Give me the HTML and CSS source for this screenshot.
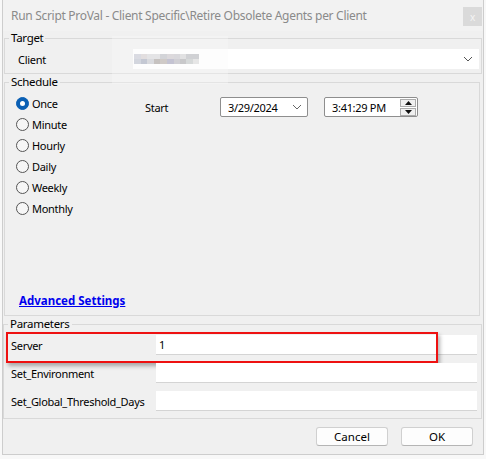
FILE: index.html
```html
<!DOCTYPE html>
<html>
<head>
<meta charset="utf-8">
<link rel="stylesheet" href="styles.css">
</head>
<body>
<div class="window">
  <div class="titlebar">
    <span class="title">Run Script ProVal - Client Specific\Retire Obsolete Agents per Client</span>
    <span class="close">x</span>
  </div>

  <fieldset class="group target">
    <legend>Target</legend>
    <div class="client-row">
      <span class="lbl">Client</span>
      <div class="combo">
        <span class="pix"><span class="pix-a"></span><span class="pix-b"></span></span>
        <svg class="chev" width="10" height="6" viewBox="0 0 10 6"><path d="M1 1 L5 5 L9 1" fill="none" stroke="#555" stroke-width="1"/></svg>
      </div>
    </div>
  </fieldset>

  <fieldset class="group schedule">
    <legend>Schedule</legend>
    <div class="sched-body">
      <div class="radios">
        <div class="radio"><span class="dot checked"></span><span>Once</span></div>
        <div class="radio"><span class="dot"></span><span>Minute</span></div>
        <div class="radio"><span class="dot"></span><span>Hourly</span></div>
        <div class="radio"><span class="dot"></span><span>Daily</span></div>
        <div class="radio"><span class="dot"></span><span>Weekly</span></div>
        <div class="radio"><span class="dot"></span><span>Monthly</span></div>
      </div>
      <div class="start-row">
        <span class="start-lbl">Start</span>
        <div class="picker date">
          <span>3/29/2024</span>
          <svg class="chev" width="10" height="6" viewBox="0 0 10 6"><path d="M1 1 L5 5 L9 1" fill="none" stroke="#666" stroke-width="1"/></svg>
        </div>
        <div class="picker time">
          <span>3:41:29 PM</span>
          <div class="spin">
            <span class="spin-btn"><svg width="7" height="4" viewBox="0 0 7 4"><path d="M3.5 0 L7 4 L0 4 Z" fill="#111"/></svg></span>
            <span class="spin-btn"><svg width="7" height="4" viewBox="0 0 7 4"><path d="M0 0 L7 0 L3.5 4 Z" fill="#111"/></svg></span>
          </div>
        </div>
      </div>
    </div>
    <a class="adv" href="#">Advanced Settings</a>
  </fieldset>

  <fieldset class="group params">
    <legend>Parameters</legend>
    <div class="param-row">
      <span class="plbl">Server</span>
      <div class="pinput">1</div>
      <div class="highlight"></div>
    </div>
    <div class="param-row">
      <span class="plbl">Set_Environment</span>
      <div class="pinput"></div>
    </div>
    <div class="param-row">
      <span class="plbl">Set_Global_Threshold_Days</span>
      <div class="pinput"></div>
    </div>
  </fieldset>

  <div class="buttons">
    <button class="btn">Cancel</button>
    <button class="btn">OK</button>
  </div>

  <div class="redact"></div>
</div>
</body>
</html>
```

FILE: styles.css
```css
* { box-sizing: border-box; }
html, body { margin: 0; padding: 0; }
body {
  background: #f8f8f8;
  font-family: "Noto Sans", "Open Sans", sans-serif;
  font-size: 11px;
  letter-spacing: -0.3px;
  color: #000;
  width: 486px;
  height: 459px;
  overflow: hidden;
}
.window {
  position: relative;
  margin-left: 2px;
  width: 482px;
  height: 455px;
  background: #f0f0f0;
  border: 1px solid #cdcdcd;
  border-top: none;
  padding: 0 1px;
}
.titlebar {
  height: 31px;
  margin: 0 -1px;
  background: #f2f2f2;
  display: flex;
  align-items: center;
  justify-content: space-between;
  padding: 0 1px 0 8px;
}
.title {
  color: #8a8a8a;
  font-size: 12px;
  letter-spacing: -0.3px;
  padding-bottom: 1px;
}
.close {
  width: 19px;
  height: 19px;
  background: #dadada;
  color: #f4f4f4;
  font-size: 10px;
  display: flex;
  align-items: center;
  justify-content: center;
  margin-top: 2px;
  margin-right: 0;
}
.group {
  margin: 0;
  padding: 0;
  border: 1px solid #d9d9d9;
  min-width: 0;
}
.group legend {
  padding: 0 2px;
  margin-left: 4px;
  line-height: 14px;
  font-size: 11.5px;
  color: #000;
}
.client-row {
  display: grid;
  grid-template-columns: 115px 346px;
  align-items: center;
  padding: 0 0 4px 13px;
  margin-top: 4px;
  height: 24px;
}
.combo {
  height: 20px;
  background: #fff;
  display: flex;
  align-items: center;
  justify-content: space-between;
  padding: 0 6px 0 1px;
}
.pix {
  display: flex;
  flex-direction: column;
  width: 65px;
}
.pix-a, .pix-b { display: block; height: 5px; }
.pix-a {
  background: linear-gradient(90deg, #c9cbd6 0 7px, #d6d0d2 7px 13px, #d9d9dc 13px 26px, #bfc0c6 26px 33px, #cdc8cc 33px 40px, #c8c6cc 40px 46px, #d4d4d6 46px 52px, #bbbcc0 52px 65px);
}
.pix-b {
  background: linear-gradient(90deg, #bfc3cf 0 7px, #a8aebf 7px 13px, #c8c9cf 13px 20px, #aba5a2 20px 26px, #b8b1ad 26px 33px, #a8a6be 33px 40px, #bab8c0 40px 46px, #aeaeb1 46px 52px, #c4c8c8 52px 59px, #dcdcdc 59px 65px);
}
.schedule {
  margin: 1px 2px 0 0;
}
.sched-body {
  display: grid;
  grid-template-columns: 140px 1fr;
  height: 205px;
}
.radios {
  padding: 4px 0 0 11px;
}
.radio {
  display: flex;
  align-items: center;
  height: 21px;
  gap: 3px;
}
.dot {
  width: 13px;
  height: 13px;
  border-radius: 50%;
  border: 1px solid #555;
  background: #f6f6f6;
  display: inline-flex;
  align-items: center;
  justify-content: center;
  flex: none;
}
.dot.checked {
  background: #0a5fb4;
  border-color: #0a5fb4;
}
.dot.checked::after {
  content: "";
  width: 5px;
  height: 5px;
  border-radius: 50%;
  background: #fff;
}
.start-row {
  display: flex;
  align-items: center;
  align-self: start;
  margin-top: 8px;
  height: 20px;
}
.start-lbl { width: 75px; }
.picker {
  height: 20px;
  background: #fff;
  border: 1px solid #8e8e8e;
  border-radius: 2px;
  display: flex;
  align-items: center;
  justify-content: space-between;
}
.date {
  width: 88px;
  padding: 0 5px 0 7px;
}
.time {
  width: 94px;
  margin-left: 16px;
  padding: 0 1px 0 7px;
}
.spin {
  display: flex;
  flex-direction: column;
  gap: 1px;
}
.spin-btn {
  width: 16px;
  height: 8px;
  border: 1px solid #acacac;
  background: #f0f0f0;
  display: flex;
  align-items: center;
  justify-content: center;
}
.adv {
  display: block;
  margin-left: 14px;
  line-height: 14px;
  margin-bottom: 7px;
  color: #0000ee;
  font-weight: bold;
  font-size: 11.5px;
  letter-spacing: 0;
  text-decoration: underline;
  width: max-content;
}
.params {
  margin: 1px 0 0 -1px;
  padding: 0 0 7px 0;
}
.param-row {
  position: relative;
  display: grid;
  grid-template-columns: 145px 321px;
  align-items: center;
  height: 20px;
  padding-left: 7px;
  margin-top: 8px;
}
.param-row:first-of-type { margin-top: 4px; }
.pinput {
  height: 20px;
  background: #fff;
  border-bottom: 1px solid #d4d4d4;
  padding: 2px 2px 0 3px;
  letter-spacing: 0;
}
.highlight {
  position: absolute;
  left: 2px;
  top: -3px;
  width: 432px;
  height: 31px;
  border: 2px solid #ee1111;
  box-shadow: 2px 3px 4px rgba(0,0,0,0.3);
  pointer-events: none;
}
.buttons {
  display: flex;
  justify-content: flex-end;
  gap: 13px;
  padding: 8px 9px 0 0;
}
.btn {
  width: 72px;
  height: 19px;
  padding: 0;
  background: #fdfdfd;
  border: 1px solid #d0d0d0;
  border-bottom-color: #b5b5b5;
  border-radius: 3px;
  font-family: "Noto Sans", "Open Sans", sans-serif;
  font-size: 11.5px;
  color: #000;
}
.redact {
  position: absolute;
  left: 109px;
  top: 36px;
  width: 116px;
  height: 48px;
  background: rgba(250,250,250,0.35);
  pointer-events: none;
}
```
